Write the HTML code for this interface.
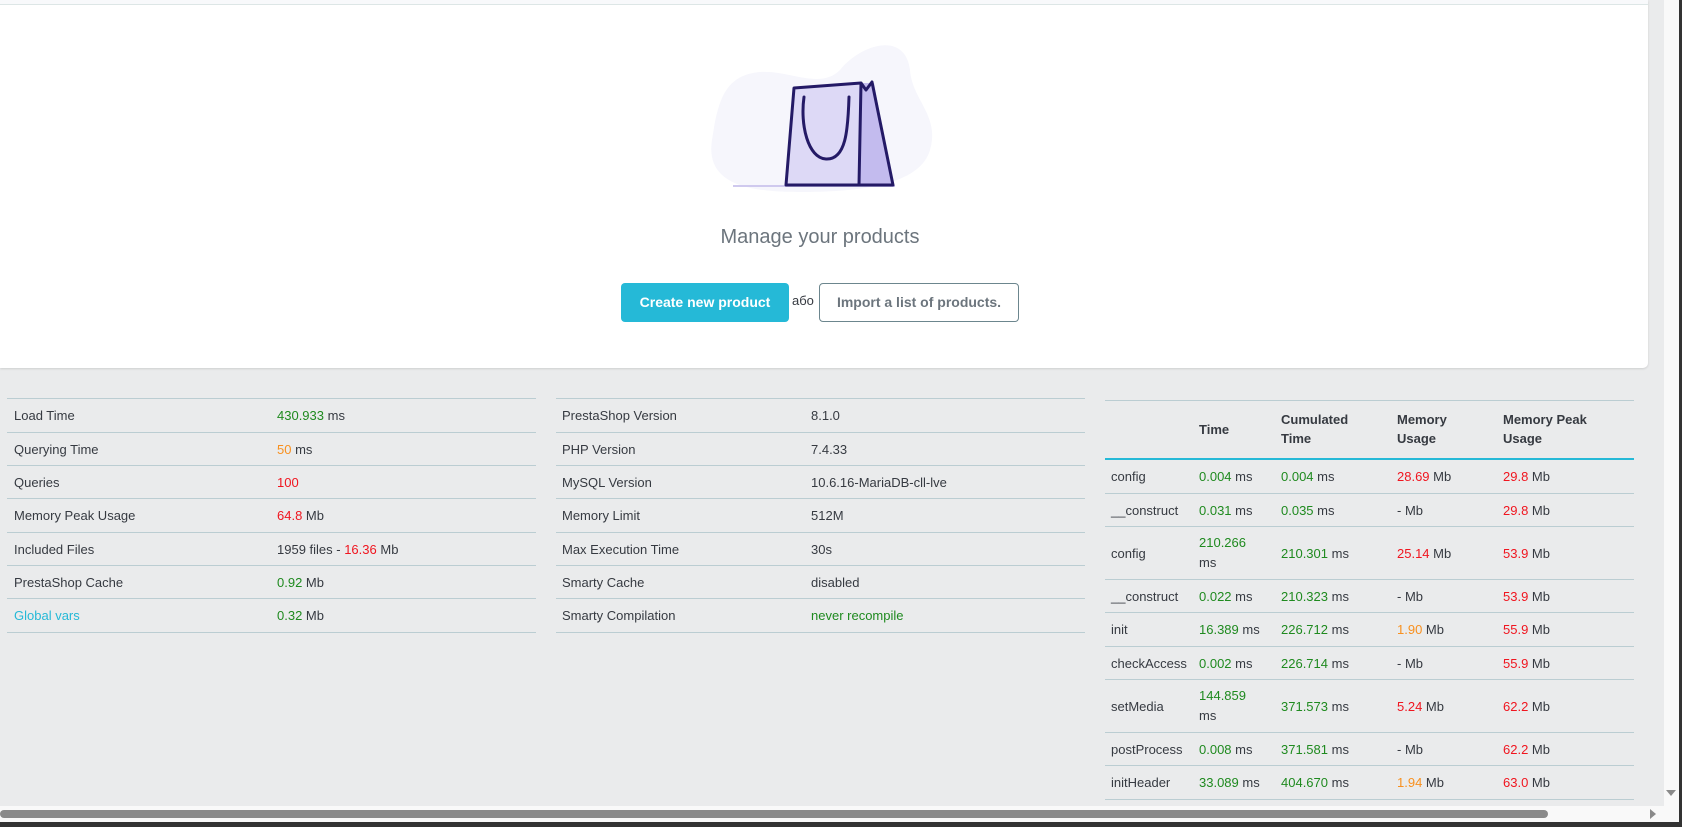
<!DOCTYPE html>
<html><head><meta charset="utf-8"><style>
*{margin:0;padding:0;box-sizing:border-box}
body{width:1682px;height:827px;overflow:hidden;background:#eaebec;font-family:"Liberation Sans",sans-serif;font-size:13px;color:#363a41;position:relative}
.abs{position:absolute}
.card{left:0;top:0;width:1648px;height:368px;background:#fff;border-radius:0 0 5px 0;box-shadow:0 1px 2px rgba(0,0,0,.12)}
.topbar{left:0;top:0;width:1648px;height:5px;background:#f8f9fb;border-bottom:1px solid #dde6e6}
.row{position:absolute;border-bottom:1px solid #bbcdd2;display:flex;align-items:center}
.row span{position:absolute}
.g{color:#1f8a1f}.r{color:#f0151f}.o{color:#f8901f}.b{color:#25b9d7}
.th{font-weight:bold;line-height:19px}
</style></head><body>
<div class="abs card"></div>
<div class="abs topbar"></div>
<svg class="abs" style="left:700px;top:30px" width="240" height="170" viewBox="700 30 240 170">
<path d="M760 72 C790 70 820 90 840 70 C860 45 905 30 910 70 C912 100 940 115 930 150 C920 185 860 192 800 192 C750 192 705 185 712 140 C718 100 725 75 760 72Z" fill="#f6f6fc"/>
<line x1="733" y1="186" x2="895" y2="186" stroke="#cfc9ee" stroke-width="2"/>
<path d="M794 88 L862 82 L893 185 L786 185 Z" fill="#ddd9f6"/>
<path d="M861 83 L874 83 L893 185 L859 185 Z" fill="#c3bbee"/>
<path d="M794 88 L861 83 L859 185 L786 185 Z" fill="none" stroke="#241a66" stroke-width="3" stroke-linejoin="round"/>
<path d="M861 83 L866 90 L872 82 L893 185 L859 185" fill="none" stroke="#241a66" stroke-width="3" stroke-linejoin="round"/>
<path d="M804 97 C800 125 808 158 826 159 C846 160 848 130 849 97" fill="none" stroke="#241a66" stroke-width="3" stroke-linecap="round"/>
</svg>
<div class="abs" style="left:620px;top:226px;width:400px;text-align:center;font-size:20px;color:#6c757d">Manage your products</div>
<div class="abs" style="left:621px;top:283px;width:168px;height:39px;background:#25b9d7;border-radius:4px;color:#fff;font-weight:bold;font-size:14px;text-align:center;line-height:39px">Create new product</div>
<div class="abs" style="left:792px;top:293px;font-size:13px">або</div>
<div class="abs" style="left:819px;top:283px;width:200px;height:39px;border:1px solid #6c868e;border-radius:4px;color:#6c757d;font-weight:bold;font-size:14px;text-align:center;line-height:37px">Import a list of products.</div>

<div class="abs" style="left:7px;top:398px;width:529px;border-top:1px solid #bbcdd2"></div>
<div id="lt"></div>
<div class="abs" style="left:556px;top:398px;width:529px;border-top:1px solid #bbcdd2"></div>
<div class="abs" style="left:1105px;top:400px;width:529px;border-top:1px solid #bbcdd2"></div>
<div class="abs" style="left:1105px;top:458px;width:529px;border-top:2px solid #25b9d7"></div>

<!-- left table -->
<div class="row" style="left:7px;top:399px;width:529px;height:34px"><span style="left:7px">Load Time</span><span style="left:270px"><i class="g" style="font-style:normal">430.933</i> ms</span></div>
<div class="row" style="left:7px;top:433px;width:529px;height:33px"><span style="left:7px">Querying Time</span><span style="left:270px"><i class="o" style="font-style:normal">50</i> ms</span></div>
<div class="row" style="left:7px;top:466px;width:529px;height:33px"><span style="left:7px">Queries</span><span style="left:270px" class="r">100</span></div>
<div class="row" style="left:7px;top:499px;width:529px;height:34px"><span style="left:7px">Memory Peak Usage</span><span style="left:270px"><i class="r" style="font-style:normal">64.8</i> Mb</span></div>
<div class="row" style="left:7px;top:533px;width:529px;height:33px"><span style="left:7px">Included Files</span><span style="left:270px">1959 files - <i class="r" style="font-style:normal">16.36</i> Mb</span></div>
<div class="row" style="left:7px;top:566px;width:529px;height:33px"><span style="left:7px">PrestaShop Cache</span><span style="left:270px"><i class="g" style="font-style:normal">0.92</i> Mb</span></div>
<div class="row" style="left:7px;top:599px;width:529px;height:34px"><span style="left:7px" class="b">Global vars</span><span style="left:270px"><i class="g" style="font-style:normal">0.32</i> Mb</span></div>

<!-- middle table -->
<div class="row" style="left:556px;top:399px;width:529px;height:34px"><span style="left:6px">PrestaShop Version</span><span style="left:255px">8.1.0</span></div>
<div class="row" style="left:556px;top:433px;width:529px;height:33px"><span style="left:6px">PHP Version</span><span style="left:255px">7.4.33</span></div>
<div class="row" style="left:556px;top:466px;width:529px;height:33px"><span style="left:6px">MySQL Version</span><span style="left:255px">10.6.16-MariaDB-cll-lve</span></div>
<div class="row" style="left:556px;top:499px;width:529px;height:34px"><span style="left:6px">Memory Limit</span><span style="left:255px">512M</span></div>
<div class="row" style="left:556px;top:533px;width:529px;height:33px"><span style="left:6px">Max Execution Time</span><span style="left:255px">30s</span></div>
<div class="row" style="left:556px;top:566px;width:529px;height:33px"><span style="left:6px">Smarty Cache</span><span style="left:255px">disabled</span></div>
<div class="row" style="left:556px;top:599px;width:529px;height:34px"><span style="left:6px">Smarty Compilation</span><span style="left:255px" class="g">never recompile</span></div>

<!-- right table header -->
<div class="abs th" style="left:1199px;top:420px">Time</div>
<div class="abs th" style="left:1281px;top:410px">Cumulated<br>Time</div>
<div class="abs th" style="left:1397px;top:410px">Memory<br>Usage</div>
<div class="abs th" style="left:1503px;top:410px">Memory Peak<br>Usage</div>

<div class="row" style="left:1105px;top:460px;width:529px;height:34px"><span style="left:6px">config</span><span style="left:94px" class="g">0.004 <i style="font-style:normal;color:#363a41">ms</i></span><span style="left:176px" class="g">0.004 <i style="font-style:normal;color:#363a41">ms</i></span><span style="left:292px"><i class="r" style="font-style:normal">28.69</i> Mb</span><span style="left:398px"><i class="r" style="font-style:normal">29.8</i> Mb</span></div>
<div class="row" style="left:1105px;top:494px;width:529px;height:33px"><span style="left:6px">__construct</span><span style="left:94px" class="g">0.031 <i style="font-style:normal;color:#363a41">ms</i></span><span style="left:176px" class="g">0.035 <i style="font-style:normal;color:#363a41">ms</i></span><span style="left:292px">- Mb</span><span style="left:398px"><i class="r" style="font-style:normal">29.8</i> Mb</span></div>
<div class="row" style="left:1105px;top:527px;width:529px;height:53px"><span style="left:6px">config</span><span style="left:94px;line-height:20px" class="g">210.266<br><i style="font-style:normal;color:#363a41">ms</i></span><span style="left:176px" class="g">210.301 <i style="font-style:normal;color:#363a41">ms</i></span><span style="left:292px"><i class="r" style="font-style:normal">25.14</i> Mb</span><span style="left:398px"><i class="r" style="font-style:normal">53.9</i> Mb</span></div>
<div class="row" style="left:1105px;top:580px;width:529px;height:33px"><span style="left:6px">__construct</span><span style="left:94px" class="g">0.022 <i style="font-style:normal;color:#363a41">ms</i></span><span style="left:176px" class="g">210.323 <i style="font-style:normal;color:#363a41">ms</i></span><span style="left:292px">- Mb</span><span style="left:398px"><i class="r" style="font-style:normal">53.9</i> Mb</span></div>
<div class="row" style="left:1105px;top:613px;width:529px;height:34px"><span style="left:6px">init</span><span style="left:94px" class="g">16.389 <i style="font-style:normal;color:#363a41">ms</i></span><span style="left:176px" class="g">226.712 <i style="font-style:normal;color:#363a41">ms</i></span><span style="left:292px"><i class="o" style="font-style:normal">1.90</i> Mb</span><span style="left:398px"><i class="r" style="font-style:normal">55.9</i> Mb</span></div>
<div class="row" style="left:1105px;top:647px;width:529px;height:33px"><span style="left:6px">checkAccess</span><span style="left:94px" class="g">0.002 <i style="font-style:normal;color:#363a41">ms</i></span><span style="left:176px" class="g">226.714 <i style="font-style:normal;color:#363a41">ms</i></span><span style="left:292px">- Mb</span><span style="left:398px"><i class="r" style="font-style:normal">55.9</i> Mb</span></div>
<div class="row" style="left:1105px;top:680px;width:529px;height:53px"><span style="left:6px">setMedia</span><span style="left:94px;line-height:20px" class="g">144.859<br><i style="font-style:normal;color:#363a41">ms</i></span><span style="left:176px" class="g">371.573 <i style="font-style:normal;color:#363a41">ms</i></span><span style="left:292px"><i class="r" style="font-style:normal">5.24</i> Mb</span><span style="left:398px"><i class="r" style="font-style:normal">62.2</i> Mb</span></div>
<div class="row" style="left:1105px;top:733px;width:529px;height:33px"><span style="left:6px">postProcess</span><span style="left:94px" class="g">0.008 <i style="font-style:normal;color:#363a41">ms</i></span><span style="left:176px" class="g">371.581 <i style="font-style:normal;color:#363a41">ms</i></span><span style="left:292px">- Mb</span><span style="left:398px"><i class="r" style="font-style:normal">62.2</i> Mb</span></div>
<div class="row" style="left:1105px;top:766px;width:529px;height:34px"><span style="left:6px">initHeader</span><span style="left:94px" class="g">33.089 <i style="font-style:normal;color:#363a41">ms</i></span><span style="left:176px" class="g">404.670 <i style="font-style:normal;color:#363a41">ms</i></span><span style="left:292px"><i class="o" style="font-style:normal">1.94</i> Mb</span><span style="left:398px"><i class="r" style="font-style:normal">63.0</i> Mb</span></div>

<!-- scrollbars -->
<div class="abs" style="left:1664px;top:0;width:15px;height:806px;background:#f9f9f9"></div>
<div class="abs" style="left:1666px;top:790px;width:0;height:0;border-left:5px solid transparent;border-right:5px solid transparent;border-top:6px solid #8a8a8a"></div>
<div class="abs" style="left:0;top:806px;width:1679px;height:16px;background:#f9f9f9"></div>
<div class="abs" style="left:0;top:810px;width:1548px;height:8px;background:#8a8a8a;border-radius:4px"></div>
<div class="abs" style="left:1650px;top:809px;width:0;height:0;border-top:5px solid transparent;border-bottom:5px solid transparent;border-left:6px solid #8a8a8a"></div>
<div class="abs" style="left:1679px;top:0;width:3px;height:827px;background:#333"></div>
<div class="abs" style="left:0;top:822px;width:1682px;height:5px;background:#333"></div>
</body></html>
